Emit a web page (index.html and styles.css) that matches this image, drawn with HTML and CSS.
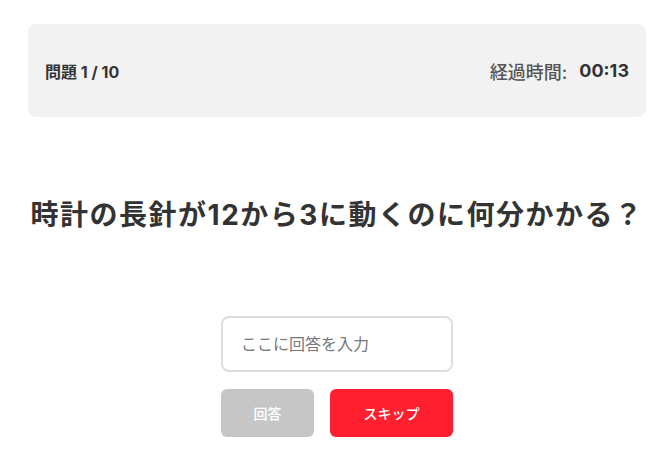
FILE: index.html
```html
<!DOCTYPE html>
<html lang="ja">
<head>
<meta charset="utf-8">
<link rel="stylesheet" href="styles.css">
</head>
<body>
<div class="page">
  <header class="status">
    <div class="progress">問題 1 / 10</div>
    <div class="timer"><span class="timer-label">経過時間:</span><span class="timer-value">00:13</span></div>
  </header>
  <h1 class="question">時計の長針が12から3に動くのに何分かかる？</h1>
  <form class="answer">
    <input class="answer-input" type="text" placeholder="ここに回答を入力">
    <div class="actions">
      <button type="button" class="btn btn-submit">回答</button>
      <button type="button" class="btn btn-skip">スキップ</button>
    </div>
  </form>
</div>
</body>
</html>
```
FILE: styles.css
```css
* { box-sizing: border-box; }
html, body { margin: 0; background: #fff; }
body {
  font-family: "Inter", "Noto Sans CJK JP", "Noto Sans", sans-serif;
  color: #333;
}
.page {
  width: 618px;
  margin-left: 28px;
  padding-top: 24px;
}
.status {
  height: 93px;
  background: #f2f2f2;
  border-radius: 8px;
  padding: 0 17px;
  display: flex;
  align-items: center;
  justify-content: space-between;
}
.progress {
  font-size: 16px;
  font-weight: 700;
  color: #333;
}
.timer { display: flex; align-items: center; gap: 12px; }
.timer-label { font-size: 18px; font-weight: 500; color: #555; }
.timer-value { font-size: 18px; font-weight: 700; color: #333; }
.question {
  margin: 78px 0 0;
  text-align: center;
  font-size: 28px;
  font-weight: 700;
  line-height: 40px;
  letter-spacing: 1.5px;
  color: #333;
}
.answer {
  margin-top: 81px;
  display: flex;
  flex-direction: column;
  align-items: center;
}
.answer-input {
  width: 232px;
  height: 56px;
  border: 2px solid #ddd;
  border-radius: 8px;
  padding: 0 18px;
  font-family: inherit;
  font-size: 16px;
  color: #333;
  outline: none;
}
.answer-input::placeholder { color: #777; }
.actions {
  margin-top: 17px;
  display: flex;
  gap: 16px;
}
.btn {
  height: 48px;
  border: 0;
  border-radius: 6px;
  color: #fff;
  font-family: inherit;
  font-size: 14px;
  font-weight: 500;
}
.btn-submit { width: 93px; background: #c6c6c6; }
.btn-skip { width: 123px; background: #ff1f2f; }
```
